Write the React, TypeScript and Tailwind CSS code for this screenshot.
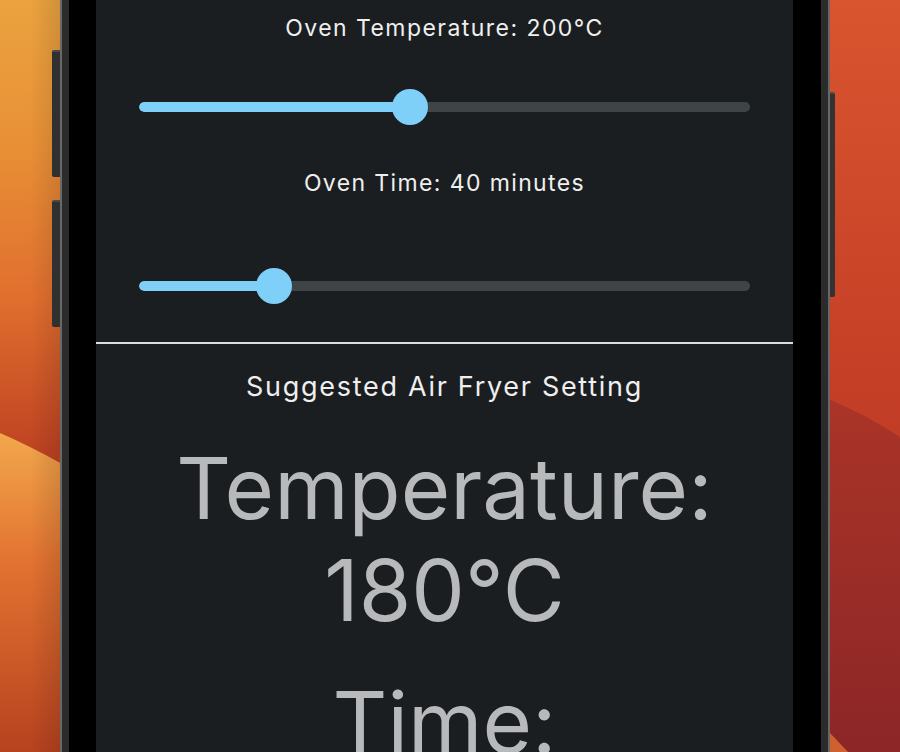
import React from "react";

function Slider({ fill }: { fill: number }) {
  return (
    <div className="relative h-[36px] mx-[43px] flex items-center">
      <div className="w-full h-[10px] rounded-full bg-[#3f4546] overflow-hidden">
        <div className="h-full rounded-full bg-[#7fd0f8]" style={{ width: `${fill}px` }} />
      </div>
      <div
        className="absolute top-0 w-[36px] h-[36px] rounded-full bg-[#7fd0f8]"
        style={{ left: `${fill - 18}px` }}
      />
    </div>
  );
}

function Wallpaper() {
  return (
    <svg className="absolute inset-0" width="900" height="752" viewBox="0 0 900 752">
      <defs>
        <linearGradient id="lb" x1="0" y1="0" x2="0" y2="1">
          <stop offset="0" stopColor="#eba33f" />
          <stop offset="0.2" stopColor="#e88f36" />
          <stop offset="0.4" stopColor="#e06e2e" />
          <stop offset="0.6" stopColor="#bf4322" />
          <stop offset="1" stopColor="#b03a1e" />
        </linearGradient>
        <linearGradient id="lw" x1="0" y1="433" x2="0" y2="752" gradientUnits="userSpaceOnUse">
          <stop offset="0" stopColor="#f2a84c" />
          <stop offset="0.4" stopColor="#e27331" />
          <stop offset="1" stopColor="#b6421f" />
        </linearGradient>
        <linearGradient id="rb" x1="0" y1="0" x2="0" y2="1">
          <stop offset="0" stopColor="#d9552f" />
          <stop offset="0.5" stopColor="#c53f26" />
          <stop offset="1" stopColor="#b4342a" />
        </linearGradient>
        <linearGradient id="rw" x1="0" y1="400" x2="0" y2="752" gradientUnits="userSpaceOnUse">
          <stop offset="0" stopColor="#aa3427" />
          <stop offset="1" stopColor="#8c2627" />
        </linearGradient>
        <linearGradient id="ls" x1="0" y1="0" x2="1" y2="0">
          <stop offset="0" stopColor="#000" stopOpacity="0" />
          <stop offset="1" stopColor="#000" stopOpacity="0.12" />
        </linearGradient>
      </defs>
      <rect x="0" y="0" width="62" height="752" fill="url(#lb)" />
      <path d="M0 433 Q30 446 62 464 L62 752 L0 752 Z" fill="url(#lw)" />
      <rect x="30" y="0" width="32" height="752" fill="url(#ls)" />
      <rect x="828" y="0" width="72" height="752" fill="url(#rb)" />
      <path d="M828 399 Q865 414 900 437 L900 752 L828 752 Z" fill="url(#rw)" />
      <path d="M830 733 L848 752 L830 752 Z" fill="#cf6030" />
    </svg>
  );
}

export default function App() {
  return (
    <div
      className="relative w-[900px] h-[752px] overflow-hidden"
      style={{ fontFamily: "Inter, 'Noto Sans', sans-serif" }}
    >
      <Wallpaper />
      {/* side buttons */}
      <div className="absolute left-[52px] top-[50px] w-[9px] h-[127px] rounded-l-[2px] bg-[#303030] border-t-2 border-[#4a4a4a]" />
      <div className="absolute left-[52px] top-[200px] w-[9px] h-[127px] rounded-l-[2px] bg-[#303030] border-t-2 border-[#4a4a4a]" />
      <div className="absolute left-[829px] top-[92px] w-[6px] h-[205px] rounded-r-[2px] bg-[#333333] border-t-2 border-[#4a4a4a]" />

      <div className="relative ml-[60px] w-[770px] h-[752px] flex border-l-2 border-r-2 border-[#686868] bg-[#2b2b2b] px-[7px]">
        <div className="flex-1 bg-black px-[27px]">
          <div className="w-[697px] h-[752px] bg-[#1b1e21] flex flex-col overflow-hidden">
            <div className="shrink-0 pt-[14px] text-center text-[23px] leading-[28px] text-[#efefef] tracking-[0.063em]">
              Oven Temperature: 200°C
            </div>
            <div className="shrink-0 mt-[47px]">
              <Slider fill={271} />
            </div>
            <div className="shrink-0 mt-[44px] text-center text-[23px] leading-[28px] text-[#efefef] tracking-[0.06em]">
              Oven Time: 40 minutes
            </div>
            <div className="shrink-0 mt-[71px]">
              <Slider fill={135} />
            </div>
            <div className="shrink-0 mt-[38px] h-[2px] bg-[#dcdcdc]" />
            <div className="shrink-0 mt-[27px] text-center text-[27px] leading-[32px] text-[#efefef] tracking-[0.063em]">
              Suggested Air Fryer Setting
            </div>
            <div className="shrink-0 mt-[35px] text-center text-[85px] leading-[102px] text-[#b8b9bb]">
              Temperature:
              <br />
              180°C
            </div>
            <div className="shrink-0 mt-[30px] text-center text-[85px] leading-[102px] text-[#b8b9bb]">
              Time:
            </div>
          </div>
        </div>
      </div>
    </div>
  );
}
